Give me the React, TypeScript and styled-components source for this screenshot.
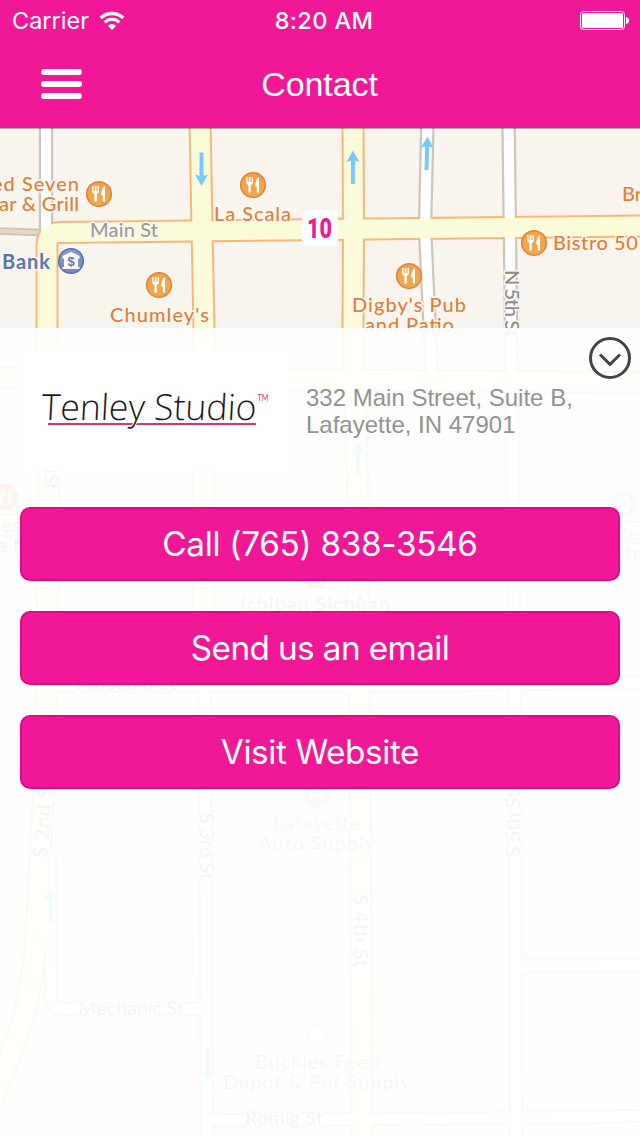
import styled, { createGlobalStyle } from "styled-components"

const PINK = "#f01896"
const ORANGE = "#e07f37"
const GREY = "#9a9a98"
const BLUE = "#5d74ae"
const SLATE = "#b3b3c6"

type Road = { d: string; kind: "main" | "side" }

const roads: Road[] = [
  { kind: "side", d: "M427.5 120 L425 228 L432 378" },
  { kind: "side", d: "M508.5 120 L510 240 L511 328 L513 500 L515 690 L516 1140" },
  { kind: "side", d: "M46 120 L46 232" },
  { kind: "side", d: "M204.500 686 L205.500 870 L207 1140" },
  { kind: "side", d: "M47 685.500 L370 686 L515 684 L644 683" },
  { kind: "side", d: "M50 850 L51 995 Q51 1009 64 1009 L206 1009" },
  { kind: "side", d: "M516 966 L644 965" },
  { kind: "side", d: "M207 1120.500 L510 1118 L644 1116" },
  { kind: "main", d: "M644 226 L60 232.500 Q46.500 233 47 246 L47 330 L48.500 480 L48 560 L46.500 700 L43 800 L36 940 C32 1000 20 1035 -8 1098" },
  { kind: "main", d: "M200 120 L202 228 L204 330 L203 500 L203 686" },
  { kind: "main", d: "M353 120 L353.500 228 L353 328 L358 500 L360 790 L361.500 1000 L362 1140" },
  { kind: "main", d: "M-4 378 L320 380 L644 382.500" },
  { kind: "main", d: "M-4 525 L644 532.500" },
]

const edge = { main: "#f6b87a", side: "#d0c5ba" }
const fill = { main: "#fcfbd9", side: "#ffffff" }
const outer = { main: 23, side: 14.5 }
const inner = { main: 19, side: 10 }

const Fork = ({ x, y }: { x: number; y: number }) => (
  <g transform={`translate(${x} ${y})`}>
    <circle r="12.300" fill="url(#food)" stroke="#df8236" strokeWidth="1.500" />
    <path
      d="M-6.800 -8 V-3 Q-6.800 -0.500 -4.600 0 V7.500 H-2.200 V0 Q0 -0.500 0 -3 V-8 H-1.400 V-3 H-2.600 V-8 H-4.200 V-3 H-5.400 V-8 Z"
      fill="#fff"
    />
    <path d="M6 -8 Q2.500 -6 2 1.500 H3.800 V7.500 H6 Z" fill="#fff" />
  </g>
)

const Arrow = ({ x, y, turn = 0 }: { x: number; y: number; turn?: number }) => (
  <path
    transform={`translate(${x} ${y}) rotate(${turn})`}
    d="M0 -17 L6.500 -5.500 L2 -7 V16.500 H-2 V-7 L-6.500 -5.500 Z"
    fill="#75c9fb"
  />
)

const StreetMap = () => (
  <MapCanvas viewBox="0 128 640 1008" aria-label="Map">
    <defs>
      <linearGradient id="food" x1="0" y1="0" x2="0" y2="1">
        <stop offset="0" stopColor="#f3a04c" />
        <stop offset="1" stopColor="#f0a94d" />
      </linearGradient>
      <linearGradient id="bank" x1="0" y1="0" x2="0" y2="1">
        <stop offset="0" stopColor="#8b9cc9" />
        <stop offset="1" stopColor="#7088c0" />
      </linearGradient>
    </defs>
    <rect y="128" width="640" height="1008" fill="#f9f4ed" />
    <path d="M-2 231 L40 232.500" stroke="#cdc1b0" strokeWidth="7.500" />
    <path d="M-2 231 L40 232.500" stroke="#e2d9c8" strokeWidth="4" />

    {(["side", "main"] as const).map((kind) => (
      <g key={kind} fill="none" stroke={edge[kind]} strokeWidth={outer[kind]}>
        {roads.filter((r) => r.kind === kind).map((r) => <path key={r.d} d={r.d} />)}
      </g>
    ))}
    {(["side", "main"] as const).map((kind) => (
      <g key={kind} fill="none" stroke={fill[kind]} strokeWidth={inner[kind]}>
        {roads.filter((r) => r.kind === kind).map((r) => <path key={r.d} d={r.d} />)}
      </g>
    ))}

    <Arrow x={201.5} y={169} turn={180} />
    <Arrow x={353} y={167.5} />
    <Arrow x={427} y={153.5} turn={2} />
    <Arrow x={204} y={457} turn={180} />
    <Arrow x={358} y={458} />
    <Arrow x={359.5} y={611} />
    <Arrow x={50.5} y={905} />
    <Arrow x={207.5} y={1065} turn={180} />

    <Fork x={99} y={194} />
    <Fork x={253} y={185} />
    <Fork x={159} y={285} />
    <Fork x={409} y={276} />
    <Fork x={534} y={243} />
    <Fork x={5} y={497} />
    <Fork x={315} y={575} />

    <g transform="translate(71 261)">
      <circle r="12.300" fill="url(#bank)" stroke="#5a6fa9" strokeWidth="1.500" />
      <path d="M0 -9 L8.500 -5 V-2.500 H7 V6 H8.500 V8 H-8.500 V6 H-7 V-2.500 H-8.500 V-5 Z" fill="#fff" />
      <text y="5" textAnchor="middle" fontSize="13" fontWeight="700" fill={BLUE}>$</text>
    </g>
    <g transform="translate(624 504)">
      <circle r="12" fill="#c9ccde" stroke="#b3b7d0" strokeWidth="1.500" />
      <path d="M-6 -6 L0 -8 L6 -6 Q5 -2 7 2 Q5 7 0 8 Q-5 7 -7 2 Q-5 -2 -6 -6 Z" fill="#fff" />
      <path d="M0 -4 L1 -1 H4 L1.600 1 L2.500 4 L0 2 L-2.500 4 L-1.600 1 L-4 -1 H-1 Z" fill="#a0a5c4" />
    </g>
    <g transform="translate(317 795)">
      <circle r="12" fill="#c6c8d6" stroke="#b3b6c8" strokeWidth="1.500" />
      <path d="M-7 5 V0 L-4.500 -5 H4.500 L7 0 V5 H4 V3 H-4 V5 Z M-4.500 -0.500 H4.500 L3.300 -3.300 H-3.300 Z" fill="#fff" fillRule="evenodd" />
    </g>
    <circle cx="317" cy="1035" r="9" fill="#fff" stroke="#ddd9cf" strokeWidth="4" />

    <Label x={-21} y={191} textLength={100} fill={ORANGE}>Red Seven</Label>
    <Label x={-14} y={211} textLength={93} fill={ORANGE}>Bar &amp; Grill</Label>
    <Label x={214} y={221} textLength={77} fill={ORANGE}>La Scala</Label>
    <Label x={110} y={321.5} textLength={99} fill={ORANGE}>Chumley's</Label>
    <Label x={352} y={312} textLength={114} fill={ORANGE}>Digby's Pub</Label>
    <Label x={365} y={332} textLength={89} fill={ORANGE}>and Patio</Label>
    <Label x={553} y={250} textLength={97} fill={ORANGE}>Bistro 501</Label>
    <Label x={622} y={201} fill={ORANGE}>Bru</Label>
    <Label x={2} y={269} textLength={48} fill={BLUE} $bold>Bank</Label>
    <Label x={90} y={237} textLength={68} fill={GREY}>Main St</Label>
    <Label transform="translate(505 270) rotate(90)" textLength={67} fill="#8c8c8c">N 5th St</Label>
    <Label transform="translate(44 427) rotate(90)" textLength={63} fill={GREY}>N 2nd St</Label>
    <Label x={1} y={532} fill={ORANGE}>es</Label>
    <Label x={-3} y={552} fill={ORANGE}>e N</Label>
    <Label x={621} y={540} fill={SLATE}>te</Label>
    <Label x={618} y={560} fill={SLATE}>rtm</Label>
    <Label x={240} y={611} textLength={150} fill={ORANGE}>Ichiban Sichuan</Label>
    <Label x={17} y={661} fill={SLATE}>F</Label>
    <Label x={77} y={690} textLength={99} fill={GREY}>Alabama St</Label>
    <Label transform="translate(47 858) rotate(-86)" textLength={78} fill={GREY}>S 2nd St</Label>
    <Label transform="translate(200 813) rotate(90)" textLength={67} fill={GREY}>S 3rd St</Label>
    <Label transform="translate(354 894) rotate(90)" textLength={73} fill={GREY}>S 4th St</Label>
    <Label transform="translate(520 857) rotate(-90)" textLength={66} fill={GREY}>S 5th St</Label>
    <Label x={273} y={830} textLength={87} fill={SLATE}>Lafayette</Label>
    <Label x={258} y={850} textLength={117} fill={SLATE}>Auto Supply</Label>
    <Label x={78} y={1014.5} textLength={106} fill={GREY}>Mechanic St</Label>
    <Label x={255} y={1069} textLength={125} fill="#b3b0a6">Buckles Feed</Label>
    <Label x={223} y={1089} textLength={187} fill="#b3b0a6">Depot &amp; Pet Supply</Label>
    <Label x={245} y={1125} textLength={78} fill={GREY}>Romig St</Label>

    <rect x="302" y="210" width="36" height="36" rx="7" fill="#fff" />
    <Pin x={307} y={238} textLength={25} lengthAdjust="spacingAndGlyphs">10</Pin>
    <rect y="128" width="640" height="1" fill="#000" opacity="0.3" />
  </MapCanvas>
)

const Wifi = () => (
  <svg width="26" height="20" viewBox="0 0 26 20" fill="none" stroke="#fff">
    <path d="M1.700 7 A16.500 16.500 0 0 1 24.300 7" strokeWidth="3.300" />
    <path d="M5.700 11.300 A10.500 10.500 0 0 1 20.300 11.300" strokeWidth="3" />
    <path d="M13 19 L8.800 14.700 A6 6 0 0 1 17.200 14.700 Z" fill="#fff" stroke="none" />
  </svg>
)

const Battery = () => (
  <svg width="49" height="19" viewBox="0 0 49 19">
    <rect x="0.500" y="0.500" width="44" height="18" rx="3" fill="none" stroke="#fff" />
    <rect x="2" y="2" width="41" height="15" rx="1.500" fill="#fff" />
    <path d="M46 6 Q49 6.500 49 9.500 Q49 12.500 46 13 Z" fill="#fff" />
  </svg>
)

const Logo = () => (
  <svg width="270" height="122" viewBox="0 0 270 122" role="img" aria-label="Tenley Studio">
    <path d="M28 75 H236" stroke="#dc3763" strokeWidth="2" />
    <LogoText
      transform="translate(21 70.500) skewX(-3)"
      textLength="215"
      lengthAdjust="spacingAndGlyphs"
    >
      Tenley Studio
    </LogoText>
    <TradeMark x="237.500" y="51.500" textLength="11" lengthAdjust="spacingAndGlyphs">
      TM
    </TradeMark>
  </svg>
)

export default function App() {
  return (
    <Screen>
      <GlobalStyle />
      <Header>
        <StatusBar>
          <Carrier>
            Carrier <Wifi />
          </Carrier>
          <Clock>8:20 AM</Clock>
          <Battery />
        </StatusBar>
        <NavBar>
          <MenuButton aria-label="Menu">
            <Bar />
            <Bar />
            <Bar />
          </MenuButton>
          <Title>Contact</Title>
        </NavBar>
      </Header>
      <Content>
        <StreetMap />
        <Panel>
          <Toggle aria-label="Collapse">
            <svg width="42" height="42" viewBox="0 0 42 42" fill="none" stroke="#444" strokeWidth="3">
              <circle cx="21" cy="21" r="19.500" />
              <path d="M11 17.500 L21 27.300 L31 17.500" />
            </svg>
          </Toggle>
          <Company>
            <LogoBox>
              <Logo />
            </LogoBox>
            <Address>
              332 Main Street, Suite B,
              <br />
              Lafayette, IN 47901
            </Address>
          </Company>
          <Actions>
            <Action $spacing="-0.3px">Call (765) 838-3546</Action>
            <Action $spacing="-0.6px">Send us an email</Action>
            <Action $spacing="-0.4px">Visit Website</Action>
          </Actions>
        </Panel>
      </Content>
    </Screen>
  )
}

const GlobalStyle = createGlobalStyle`
  * {
    box-sizing: border-box;
  }

  body {
    margin: 0;
    font-family: "Liberation Sans", Arial, sans-serif;
  }

  button {
    padding: 0;
    border: 0;
    background: none;
    font: inherit;
  }

  svg {
    display: block;
  }
`

const Screen = styled.div`
  display: flex;
  flex-direction: column;
  width: 640px;
  height: 1136px;
  overflow: hidden;
`

const Header = styled.header`
  height: 128px;
  flex-shrink: 0;
  color: #ffffff;
  background: ${PINK};
`

const StatusBar = styled.div`
  display: grid;
  grid-template-columns: 1fr auto 1fr;
  align-items: center;
  height: 40px;
  padding: 1px 11px 0 12px;
  font-family: Inter, sans-serif;
  font-size: 23.5px;

  > svg {
    justify-self: end;
  }
`

const Carrier = styled.span`
  display: flex;
  align-items: center;
  gap: 10px;
`

const Clock = styled.span`
  padding-left: 7px;
  font-weight: 500;
  letter-spacing: 0.4px;
`

const NavBar = styled.nav`
  display: grid;
  grid-template-columns: 82px 1fr 82px;
  align-items: center;
  height: 88px;
`

const MenuButton = styled.button`
  display: flex;
  flex-direction: column;
  gap: 6px;
  justify-self: end;
`

const Bar = styled.span`
  width: 41px;
  height: 6px;
  border-radius: 3px;
  background: #ffffff;
`

const Title = styled.h1`
  margin: 0;
  padding-right: 1px;
  font-size: 34px;
  font-weight: 400;
  letter-spacing: -0.1px;
  text-align: center;
`

const Content = styled.main`
  display: grid;
  flex: 1;

  > * {
    grid-area: 1 / 1;
  }
`

const MapCanvas = styled.svg`
  width: 640px;
  height: 1008px;
`

const Label = styled.text<{ $bold?: boolean }>`
  font-family: Lato, "Open Sans", sans-serif;
  font-size: 20px;
  font-weight: ${({ $bold }) => ($bold ? 700 : 500)};
  stroke: #fbf8f2;
  stroke-width: 3px;
  stroke-linejoin: round;
  paint-order: stroke;
`

const Pin = styled.text`
  fill: ${PINK};
  font-family: Roboto, sans-serif;
  font-size: 28px;
  font-weight: 900;
`

const Panel = styled.section`
  position: relative;
  display: flex;
  flex-direction: column;
  gap: 36px;
  margin-top: 200px;
  padding: 21px 20px 0;
  background: rgba(255, 255, 255, 0.9);
`

const Toggle = styled.button`
  position: absolute;
  top: 9px;
  right: 9px;
`

const Company = styled.div`
  display: flex;
  align-items: center;
  gap: 16px;
`

const LogoBox = styled.div`
  background: #ffffff;
`

const LogoText = styled.text`
  fill: #1b1b1b;
  font-family: "Open Sans", sans-serif;
  font-size: 36px;
  font-weight: 300;
  stroke: #ffffff;
  stroke-width: 2px;
  paint-order: stroke;
`

const TradeMark = styled.text`
  fill: #dc3763;
  font-family: Lato, sans-serif;
  font-size: 8.5px;
`

const Address = styled.p`
  margin: 2px 0 0;
  color: #929292;
  font-size: 24px;
  line-height: 27px;
`

const Actions = styled.div`
  display: flex;
  flex-direction: column;
  gap: 30px;
`

const Action = styled.button<{ $spacing: string }>`
  height: 74px;
  border: 2px solid #e2098b;
  border-radius: 10px;
  color: #ffffff;
  background: ${PINK};
  font-family: Inter, sans-serif;
  font-size: 33.3px;
  letter-spacing: ${({ $spacing }) => $spacing};
`
